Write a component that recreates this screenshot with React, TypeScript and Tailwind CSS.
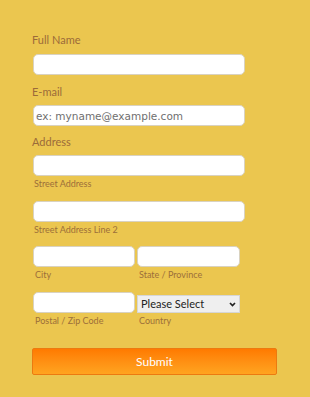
import React from "react";

function SubLabel({ children }: { children: React.ReactNode }) {
  return <span className="mt-[2px] ml-[2px] text-[9px] leading-[12px] text-[#9c6f3a]">{children}</span>;
}

const inputCls =
  "h-[21px] rounded-[5px] border border-[#d9d2c0] bg-white px-[2px] text-[10.5px] font-['DejaVu_Sans',sans-serif] text-[#555] outline-none placeholder:text-[#6f6f6f]";

const labelCls = "text-[11px] leading-[14px] text-[#9b6b3a]";

export default function App() {
  return (
    <div className="min-h-[397px] w-[310px] bg-[#ebc64f] pl-[32px] pt-[33px] font-['Lato',sans-serif]">
      <div className="flex flex-col">
        <label className={labelCls}>Full Name</label>
        <input className={`${inputCls} mt-[7px] w-[212px] ml-[1px]`} />

        <label className={`${labelCls} mt-[10px]`}>E-mail</label>
        <input className={`${inputCls} mt-[6px] w-[212px] ml-[1px]`} placeholder="ex: myname@example.com" />

        <label className={`${labelCls} mt-[9px]`}>Address</label>
        <input className={`${inputCls} mt-[6px] w-[212px] ml-[1px]`} />
        <SubLabel>Street Address</SubLabel>

        <input className={`${inputCls} mt-[11px] w-[212px] ml-[1px]`} />
        <SubLabel>Street Address Line 2</SubLabel>

        <div className="mt-[10px] ml-[1px] flex gap-[2px]">
          <div className="flex flex-col">
            <input className={`${inputCls} w-[102px]`} />
            <SubLabel>City</SubLabel>
          </div>
          <div className="flex flex-col">
            <input className={`${inputCls} w-[103px]`} />
            <SubLabel>State / Province</SubLabel>
          </div>
        </div>

        <div className="mt-[11px] ml-[1px] flex gap-[2px]">
          <div className="flex flex-col">
            <input className={`${inputCls} w-[102px]`} />
            <SubLabel>Postal / Zip Code</SubLabel>
          </div>
          <div className="flex flex-col">
            <div className="relative mt-[3px] h-[18px] w-[103px] border border-[#d6d6d6] bg-[#efefef]">
              <select className="block h-full w-full appearance-none bg-transparent py-0 pl-[3px] text-[11px] leading-[16px] text-[#222] outline-none">
                <option>Please Select</option>
              </select>
              <svg
                className="pointer-events-none absolute right-[3px] top-[6px]"
                width="7"
                height="5"
                viewBox="0 0 7 5"
              >
                <path d="M1 1 L3.5 3.5 L6 1" fill="none" stroke="#222" strokeWidth="1.7" />
              </svg>
            </div>
            <SubLabel>Country</SubLabel>
          </div>
        </div>

        <button className="mt-[21px] h-[27px] w-[245px] rounded-[2px] border border-[#ec7a10] bg-gradient-to-b from-[#ff7a00] to-[#ffa41f] text-[12px] leading-[14px] text-white">
          Submit
        </button>
      </div>
    </div>
  );
}
